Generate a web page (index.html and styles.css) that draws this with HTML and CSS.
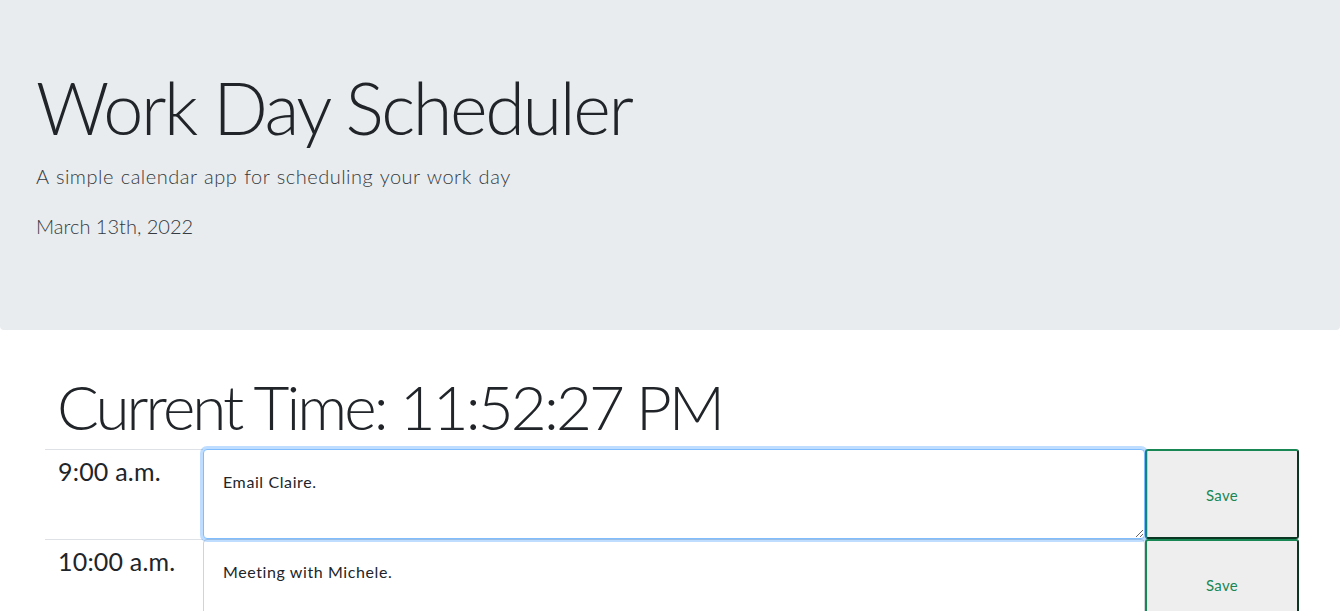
FILE: index.html
```html
<!DOCTYPE html>
<html lang="en">
<head>
<meta charset="utf-8">
<title>Work Day Scheduler</title>
<link rel="stylesheet" href="styles.css">
</head>
<body>
<header class="jumbotron">
  <h1 class="display-3">Work Day Scheduler</h1>
  <p class="lead">A simple calendar app for scheduling your work day</p>
  <p class="lead date">March 13th, 2022</p>
</header>
<main class="container">
  <h1 class="current-time">Current Time: 11:52:27 PM</h1>
  <div class="time-block">
    <div class="hour">9:00 a.m.</div>
    <textarea class="description focused">Email Claire.</textarea>
    <button class="saveBtn">Save</button>
  </div>
  <div class="time-block">
    <div class="hour">10:00 a.m.</div>
    <textarea class="description">Meeting with Michele.</textarea>
    <button class="saveBtn">Save</button>
  </div>
  <div class="time-block">
    <div class="hour">11:00 a.m.</div>
    <textarea class="description"></textarea>
    <button class="saveBtn">Save</button>
  </div>
</main>
</body>
</html>
```
FILE: styles.css
```css
* { box-sizing: border-box; }
body {
  margin: 0;
  font-family: Lato, "Liberation Sans", sans-serif;
  color: #212529;
  background: #fff;
}
.jumbotron {
  background: #e9ecef;
  height: 330px;
  padding: 64px 36px 0;
  border-radius: 0 0 4px 4px;
}
.display-3 {
  margin: 0 0 11px;
  font-size: 72px;
  font-weight: 300;
  line-height: 86px;
  letter-spacing: -0.033em;
}
.lead {
  margin: 0;
  font-size: 20px;
  font-weight: 300;
  line-height: 30px;
  letter-spacing: 0.5px;
  word-spacing: 1px;
  color: #343a40;
}
.lead.date {
  margin-top: 20px;
  letter-spacing: 0;
  word-spacing: 0;
}
.container {
  padding: 0 41px 0 45px;
  margin-top: 39px;
}
.current-time {
  margin: 0 0 6px;
  padding-left: 12px;
  font-size: 62px;
  font-weight: 300;
  line-height: 74px;
  letter-spacing: -2.9px;
}
.time-block {
  display: flex;
  height: 90px;
}
.hour {
  width: 158px;
  flex: none;
  border-top: 1px solid #dee2e6;
  padding: 6px 0 0 13px;
  font-size: 25px;
  line-height: 30px;
  letter-spacing: 0.2px;
  color: #212529;
}
.description {
  flex: 1;
  margin: 0;
  padding: 20px 19px;
  border: 1px solid #ced4da;
  border-radius: 4px;
  font-family: Lato, "Liberation Sans", sans-serif;
  font-size: 16px;
  line-height: 24px;
  letter-spacing: 0.6px;
  color: #212529;
  background: #fff;
  outline: none;
  resize: vertical;
}
.description.focused {
  border-color: #80bdff;
  box-shadow: 0 0 0 3px rgba(0, 123, 255, 0.25);
  position: relative;
  z-index: 1;
}
.saveBtn {
  width: 154px;
  flex: none;
  margin: 0;
  background: #eeeeee;
  border: 2px solid;
  border-color: #198754 #0a3622 #0a3622 #198754;
  border-radius: 3px;
  color: #198754;
  font-family: Lato, "Liberation Sans", sans-serif;
  font-size: 15px;
  letter-spacing: 0.3px;
  padding-top: 3px;
}
```
